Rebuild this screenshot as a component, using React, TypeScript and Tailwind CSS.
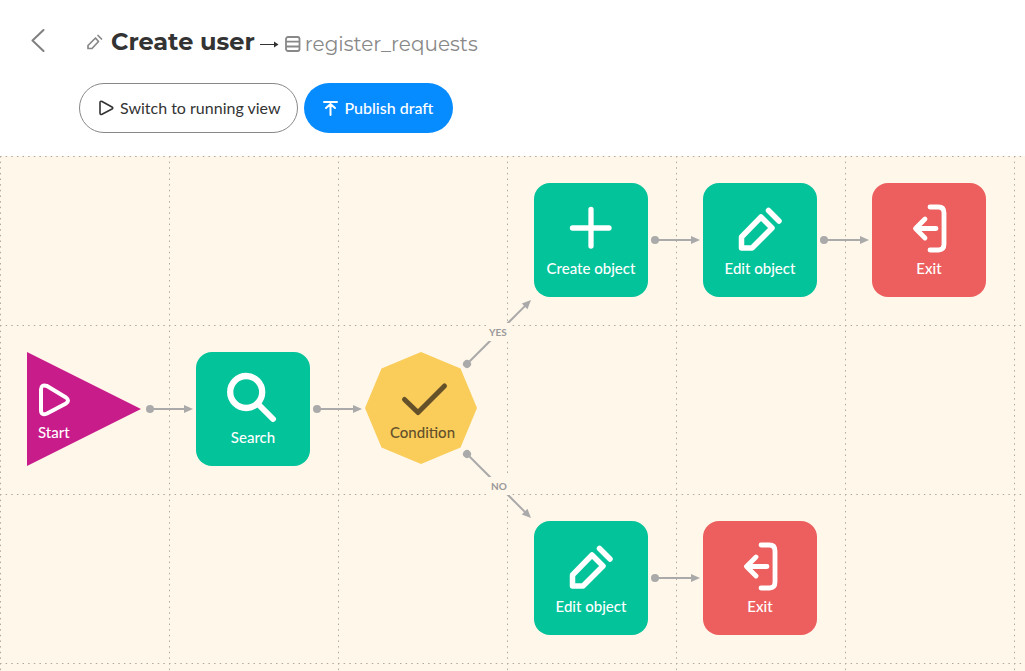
import type { ReactNode } from "react";

type Kind = "create" | "edit" | "exit" | "search";
type NodeSpec = { col: number; row: number; kind: Kind; label: string };

const CELL = 169;

const nodes: NodeSpec[] = [
  { col: 1, row: 1, kind: "search", label: "Search" },
  { col: 3, row: 0, kind: "create", label: "Create object" },
  { col: 4, row: 0, kind: "edit", label: "Edit object" },
  { col: 5, row: 0, kind: "exit", label: "Exit" },
  { col: 3, row: 2, kind: "edit", label: "Edit object" },
  { col: 4, row: 2, kind: "exit", label: "Exit" },
];

const straightLinks = [
  { x1: 150, x2: 193, y: 253 },
  { x1: 317, x2: 362, y: 253 },
  { x1: 655, x2: 700, y: 84 },
  { x1: 824, x2: 869, y: 84 },
  { x1: 655, x2: 700, y: 422 },
];

const glyphs: Record<Kind, ReactNode> = {
  search: (
    <>
      <circle cx="50.200" cy="40" r="16" strokeWidth="6.300" />
      <path d="M62 52 77 67" strokeWidth="6" />
    </>
  ),
  create: <path d="M57 26.500v36.500M38.500 45h36.500" strokeWidth="5.300" />,
  edit: <path d="M58 34 69 45 49 65H38.500V54ZM65.500 27.500 76 38" strokeWidth="5.500" />,
  exit: <path d="M58 24h8.500q5.500 0 5.500 6v31q0 6-5.500 6h-8.500M64 45.500H44M53 36l-9.500 9.500L53 55" strokeWidth="4.800" />,
};

function Arrow({ x1, y1, x2, y2 }: { x1: number; y1: number; x2: number; y2: number }) {
  const angle = (Math.atan2(y2 - y1, x2 - x1) * 180) / Math.PI;
  const length = Math.hypot(x2 - x1, y2 - y1);
  return (
    <g transform={`translate(${x1} ${y1}) rotate(${angle})`} fill="#aaaaaa">
      <circle r="4" />
      <path d={`M0 0H${length - 8}`} stroke="#aaaaaa" strokeWidth="2" />
      <path d={`M${length} 0l-9-4v8z`} />
    </g>
  );
}

function Node({ col, row, kind, label }: NodeSpec) {
  return (
    <button
      type="button"
      className={`absolute size-[114px] rounded-2xl text-white ${kind === "exit" ? "bg-[#ed5f5f]" : "bg-[#03c39a]"}`}
      style={{ left: col * CELL + 27, top: row * CELL + 27 }}
    >
      <svg viewBox="0 0 114 114" className="absolute inset-0" fill="none" stroke="currentColor" strokeLinecap="round" strokeLinejoin="round" aria-hidden="true">
        {glyphs[kind]}
      </svg>
      <span className="absolute inset-x-0 bottom-[19px] text-[15px] leading-5 font-medium">{label}</span>
    </button>
  );
}

function Flow() {
  return (
    <main className="relative min-h-[515px] grow overflow-hidden bg-[#fff7ea]">
      <svg className="absolute inset-0 h-full w-full" aria-hidden="true">
        <defs>
          <pattern id="grid" width={CELL} height={CELL} patternUnits="userSpaceOnUse">
            <path d="M0 .5H169M.5 0V169" fill="none" stroke="#b0a99e" strokeDasharray="1.500 4.133" />
          </pattern>
        </defs>
        <rect width="100%" height="100%" fill="url(#grid)" />
        {straightLinks.map(({ x1, x2, y }) => (
          <Arrow key={`${x1}-${y}`} x1={x1} y1={y} x2={x2} y2={y} />
        ))}
        <Arrow x1={467} y1={208} x2={531} y2={144} />
        <Arrow x1={467} y1={298} x2={531} y2={362} />
      </svg>
      <span className="absolute top-[167px] left-[486px] bg-[#fff7ea] px-[3px] text-[10px] leading-[18px] font-bold text-[#999999]">YES</span>
      <span className="absolute top-[321px] left-[488px] bg-[#fff7ea] px-[3px] text-[10px] leading-[18px] font-bold text-[#999999]">NO</span>

      <button type="button" className="absolute top-[196px] left-[27px] size-[114px] text-white">
        <svg viewBox="0 0 114 114" className="absolute inset-0" aria-hidden="true">
          <path d="M0 0 114 57 0 114Z" fill="#c91c8b" />
          <path d="M14 37.500V58q0 6 6 3.500L39 51.500q4-3 0-6L20 34q-6-2-6 3.500Z" fill="none" stroke="currentColor" strokeWidth="4" strokeLinejoin="round" />
        </svg>
        <span className="absolute bottom-6 left-[11px] text-[15px] leading-5 font-medium">Start</span>
      </button>

      {nodes.map((node) => (
        <Node key={`${node.col}-${node.row}`} {...node} />
      ))}

      <button type="button" className="absolute top-[196px] left-[365px] size-[112px] text-[#64512a]">
        <svg viewBox="0 0 112 112" className="absolute inset-0" aria-hidden="true">
          <path d="M56 0 95.500 16.500 112 56 95.500 95.500 56 112 16.500 95.500 0 56 16.500 16.500Z" fill="#facd5a" />
          <path d="M39.500 47.500 53 60.500 79.500 34" fill="none" stroke="currentColor" strokeWidth="5" strokeLinecap="round" strokeLinejoin="round" />
        </svg>
        <span className="absolute inset-x-0 bottom-[22px] pl-[3px] text-[15px] leading-5 font-medium">Condition</span>
      </button>
    </main>
  );
}

export default function App() {
  return (
    <div className="flex min-h-screen flex-col bg-white font-['Lato',sans-serif] text-[#333333]">
      <header className="flex h-[156px] shrink-0">
        <a href="#back" aria-label="Back" className="mt-7 ml-[30px] h-6 w-4 text-[#808080]">
          <svg viewBox="0 0 16 24" fill="none" stroke="currentColor" strokeWidth="2" strokeLinecap="round" strokeLinejoin="round" aria-hidden="true">
            <path d="M13.500 2 2.500 12.500 13.500 23" />
          </svg>
        </a>
        <div className="ml-[33px] flex flex-col">
          <div className="mt-6 flex h-9 items-center pl-[7px] font-['Montserrat','Inter',sans-serif]">
            <svg className="size-[18px] text-[#888888]" viewBox="0 0 18 18" fill="none" stroke="currentColor" strokeWidth="1.700" strokeLinecap="round" strokeLinejoin="round" aria-hidden="true">
              <path d="M9.500 5 12.500 8.500 6 15.500H2V12.500ZM12 2.500 15.500 6" />
            </svg>
            <h1 className="ml-[7px] text-2xl font-bold">Create user</h1>
            <div className="flex items-center pt-1">
              <svg className="ml-[5px] h-[10px] w-[19px]" viewBox="0 0 19 10" fill="none" stroke="currentColor" aria-hidden="true">
                <path d="M0 5.500H18" />
                <path d="M14 2.500l4.500 3L14 8.500Z" fill="currentColor" stroke="none" />
              </svg>
              <svg className="ml-[6px] size-4 text-[#888888]" viewBox="0 0 16 16" fill="none" stroke="currentColor" strokeWidth="1.800" aria-hidden="true">
                <rect x="1" y="1" width="13.500" height="14" rx="2" />
                <path d="M1 5.700H14.500M1 10.500H14.500" />
              </svg>
              <a href="#register_requests" className="ml-1 text-xl leading-8 text-[#888888]">register_requests</a>
            </div>
          </div>
          <div className="mt-[23px] flex gap-[6px] text-base">
            <button type="button" className="flex h-[50px] items-center gap-[5px] rounded-full border border-[#888888] pr-[17px] pl-[18px]">
              <svg className="h-4 w-[17px]" viewBox="0 0 17 16" fill="none" stroke="currentColor" strokeWidth="1.600" strokeLinejoin="round" aria-hidden="true">
                <path d="M2 2.500V13q0 2 2 1.200L14 9q1.500-1 0-2L4 1.500Q2 .8 2 2.500Z" />
              </svg>
              Switch to running view
            </button>
            <button type="button" className="flex h-[50px] items-center gap-[5px] rounded-full bg-[#078cff] pr-5 pl-[18px] font-medium text-white">
              <svg className="h-4 w-[17px]" viewBox="0 0 17 16" fill="none" stroke="currentColor" strokeWidth="2" strokeLinecap="round" aria-hidden="true">
                <path d="M2 2H15M8.500 15V4M4 8l4.500-4L13 8" />
              </svg>
              Publish draft
            </button>
          </div>
        </div>
      </header>
      <Flow />
    </div>
  );
}
